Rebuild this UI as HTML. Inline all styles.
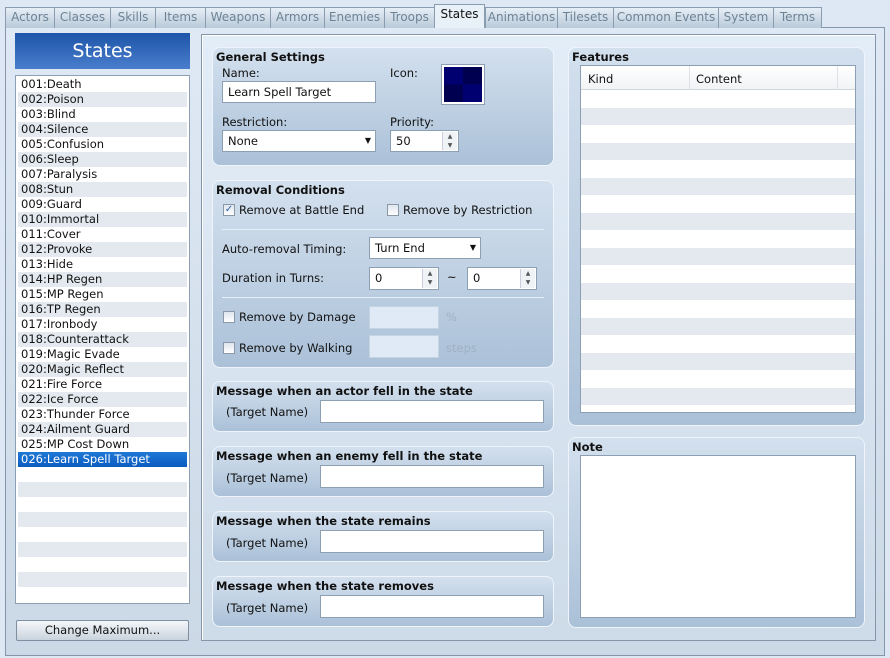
<!DOCTYPE html>
<html><head><meta charset="utf-8"><style>
*{box-sizing:border-box;margin:0;padding:0}
body{width:890px;height:658px;background:#dde8f4;font-family:"DejaVu Sans","Liberation Sans",sans-serif;font-size:11.5px;color:#111;position:relative;overflow:hidden}
.a{position:absolute}
.tab{position:absolute;top:7px;height:21px;border:1px solid #8a9db0;border-bottom:none;background:linear-gradient(#e6eef6,#b9cad9);color:#6d8395;font-size:12px;text-align:center;line-height:19px}
.tab.on{top:4px;height:24px;background:#e8f0f8;color:#111;z-index:2}
.grp{position:absolute;border:1px solid #eef4fa;border-radius:8px;background:linear-gradient(#d3e0ee,#abc1d8)}
.grp b{position:absolute;left:3px;top:2px;font-size:11.5px}
.in{position:absolute;background:#fff;border:1px solid #8d9fb2;padding-left:5px;line-height:20px}
.spin{position:absolute;right:1px;width:15px;border-left:1px solid #ccd;background:#f0f3f6}
.dis{background:#dfeaf6;border-color:#c5d4e2}
.cb{position:absolute;width:12px;height:12px;border:1px solid #8a98a8;background:linear-gradient(#dfe6ee,#fff)}
.hr{position:absolute;height:1px;background:#8fa4ba;border-bottom:1px solid #e6eef6}
.row{height:15px;line-height:15px;padding-left:3px;white-space:nowrap}
.row:nth-child(even){background:#e3e9ef}
</style></head><body>
<div class="a" style="left:5px;top:27px;width:880px;height:629px;border:1px solid #8596a8;background:linear-gradient(#dfe9f5,#cbd8e5)"></div>
<div class="tab" style="left:5px;width:50px">Actors</div>
<div class="tab" style="left:54px;width:57px">Classes</div>
<div class="tab" style="left:110px;width:46px">Skills</div>
<div class="tab" style="left:155px;width:51px">Items</div>
<div class="tab" style="left:205px;width:66px">Weapons</div>
<div class="tab" style="left:270px;width:55px">Armors</div>
<div class="tab" style="left:324px;width:61px">Enemies</div>
<div class="tab" style="left:384px;width:51px">Troops</div>
<div class="tab on" style="left:434px;width:51px">States</div>
<div class="tab" style="left:485px;width:73px">Animations</div>
<div class="tab" style="left:557px;width:57px">Tilesets</div>
<div class="tab" style="left:613px;width:106px">Common Events</div>
<div class="tab" style="left:718px;width:56px">System</div>
<div class="tab" style="left:773px;width:49px">Terms</div>

<div class="a" style="left:15px;top:33px;width:175px;height:36px;background:linear-gradient(#1d55a8,#4a7dcc);color:#fff;font-size:19px;text-align:center;line-height:36px">States</div>
<div class="a" style="left:15px;top:75px;width:175px;height:529px;border:1px solid #8d9fb2;background:#fff;padding:1px 2px;overflow:hidden">
<div class="row">001:Death</div><div class="row">002:Poison</div><div class="row">003:Blind</div><div class="row">004:Silence</div><div class="row">005:Confusion</div><div class="row">006:Sleep</div><div class="row">007:Paralysis</div><div class="row">008:Stun</div><div class="row">009:Guard</div><div class="row">010:Immortal</div><div class="row">011:Cover</div><div class="row">012:Provoke</div><div class="row">013:Hide</div><div class="row">014:HP Regen</div><div class="row">015:MP Regen</div><div class="row">016:TP Regen</div><div class="row">017:Ironbody</div><div class="row">018:Counterattack</div><div class="row">019:Magic Evade</div><div class="row">020:Magic Reflect</div><div class="row">021:Fire Force</div><div class="row">022:Ice Force</div><div class="row">023:Thunder Force</div><div class="row">024:Ailment Guard</div><div class="row">025:MP Cost Down</div><div class="row" style="background:linear-gradient(#1f78d6,#0b5cc0);color:#fff">026:Learn Spell Target</div>
<div class="row"></div><div class="row"></div><div class="row"></div><div class="row"></div><div class="row"></div><div class="row"></div><div class="row"></div><div class="row"></div><div class="row"></div>
</div>
<div class="a" style="left:16px;top:620px;width:173px;height:21px;border:1px solid #7e8fa2;border-radius:2px;background:linear-gradient(#f4f7fa,#c9d3dd);text-align:center;line-height:19px">Change Maximum...</div>

<div class="a" style="left:201px;top:34px;width:675px;height:607px;border:1px solid #8596a8;background:linear-gradient(#e3edf8,#cedbe8);box-shadow:inset 1px 1px 0 #fff"></div>

<div class="grp" style="left:212px;top:47px;width:342px;height:119px"><b>General Settings</b></div>
<div class="a" style="left:222px;top:66px">Name:</div>
<div class="in" style="left:222px;top:81px;width:154px;height:22px">Learn Spell Target</div>
<div class="a" style="left:390px;top:66px">Icon:</div>
<div class="a" style="left:442px;top:65px;width:42px;height:39px;border:2px solid #fff;outline:1px solid #8d9fb2;background:conic-gradient(from 90deg at 50% 50%,#000070 0 25%,#000050 25% 50%,#000070 50% 75%,#000050 75%)"></div>
<div class="a" style="left:222px;top:115px">Restriction:</div>
<div class="in" style="left:222px;top:130px;width:154px;height:22px">None<span class="a" style="right:4px;top:0;font-size:8px">▼</span></div>
<div class="a" style="left:390px;top:115px">Priority:</div>
<div class="in" style="left:390px;top:130px;width:69px;height:22px">50<div class="spin" style="top:1px;height:18px;font-size:6px;line-height:9px;text-align:center;color:#555">▲<br>▼</div></div>

<div class="grp" style="left:212px;top:180px;width:342px;height:188px"><b>Removal Conditions</b></div>
<div class="cb" style="left:223px;top:204px;font-size:10px;line-height:10px;color:#2b5fa8;text-align:center">✓</div>
<div class="a" style="left:239px;top:203px">Remove at Battle End</div>
<div class="cb" style="left:387px;top:204px"></div>
<div class="a" style="left:403px;top:203px">Remove by Restriction</div>
<div class="hr" style="left:222px;top:229px;width:322px"></div>
<div class="a" style="left:222px;top:242px">Auto-removal Timing:</div>
<div class="in" style="left:369px;top:237px;width:112px;height:22px">Turn End<span class="a" style="right:4px;top:0;font-size:8px">▼</span></div>
<div class="a" style="left:222px;top:271px">Duration in Turns:</div>
<div class="in" style="left:369px;top:267px;width:70px;height:23px">0<div class="spin" style="top:1px;height:19px;font-size:6px;line-height:9px;text-align:center;color:#555">▲<br>▼</div></div>
<div class="a" style="left:447px;top:270px">~</div>
<div class="in" style="left:467px;top:267px;width:70px;height:23px">0<div class="spin" style="top:1px;height:19px;font-size:6px;line-height:9px;text-align:center;color:#555">▲<br>▼</div></div>
<div class="hr" style="left:222px;top:297px;width:322px"></div>
<div class="cb" style="left:223px;top:311px"></div>
<div class="a" style="left:239px;top:310px">Remove by Damage</div>
<div class="in dis" style="left:369px;top:306px;width:70px;height:23px"></div>
<div class="a" style="left:446px;top:310px;color:#9fb1c4">%</div>
<div class="cb" style="left:223px;top:342px"></div>
<div class="a" style="left:239px;top:341px">Remove by Walking</div>
<div class="in dis" style="left:369px;top:335px;width:70px;height:23px"></div>
<div class="a" style="left:446px;top:341px;color:#9fb1c4">steps</div>

<div class="grp" style="left:212px;top:381px;width:342px;height:51px"><b>Message when an actor fell in the state</b></div>
<div class="a" style="left:226px;top:405px">(Target Name)</div>
<div class="in" style="left:320px;top:400px;width:224px;height:23px"></div>
<div class="grp" style="left:212px;top:446px;width:342px;height:51px"><b>Message when an enemy fell in the state</b></div>
<div class="a" style="left:226px;top:471px">(Target Name)</div>
<div class="in" style="left:320px;top:465px;width:224px;height:23px"></div>
<div class="grp" style="left:212px;top:511px;width:342px;height:51px"><b>Message when the state remains</b></div>
<div class="a" style="left:226px;top:536px">(Target Name)</div>
<div class="in" style="left:320px;top:530px;width:224px;height:23px"></div>
<div class="grp" style="left:212px;top:576px;width:342px;height:51px"><b>Message when the state removes</b></div>
<div class="a" style="left:226px;top:601px">(Target Name)</div>
<div class="in" style="left:320px;top:595px;width:224px;height:23px"></div>

<div class="grp" style="left:568px;top:47px;width:297px;height:379px"><b>Features</b></div>
<div class="a" style="left:580px;top:65px;width:276px;height:348px;border:1px solid #8d9fb2;background:repeating-linear-gradient(#fff 0 18px,#e3e9ef 18px 35px);background-position:0 24px;background-color:#fff">
<div style="height:24px;background:linear-gradient(#fff,#f1f3f5);border-bottom:1px solid #d0d6dc;position:relative">
<span class="a" style="left:7px;top:6px">Kind</span><span class="a" style="left:108px;top:0;width:1px;height:24px;background:#dde2e8"></span><span class="a" style="left:115px;top:6px">Content</span><span class="a" style="left:256px;top:0;width:1px;height:24px;background:#dde2e8"></span></div>
</div>
<div class="grp" style="left:568px;top:437px;width:297px;height:191px"><b>Note</b></div>
<div class="a" style="left:580px;top:455px;width:276px;height:163px;border:1px solid #8d9fb2;background:#fff"></div>
</body></html>
